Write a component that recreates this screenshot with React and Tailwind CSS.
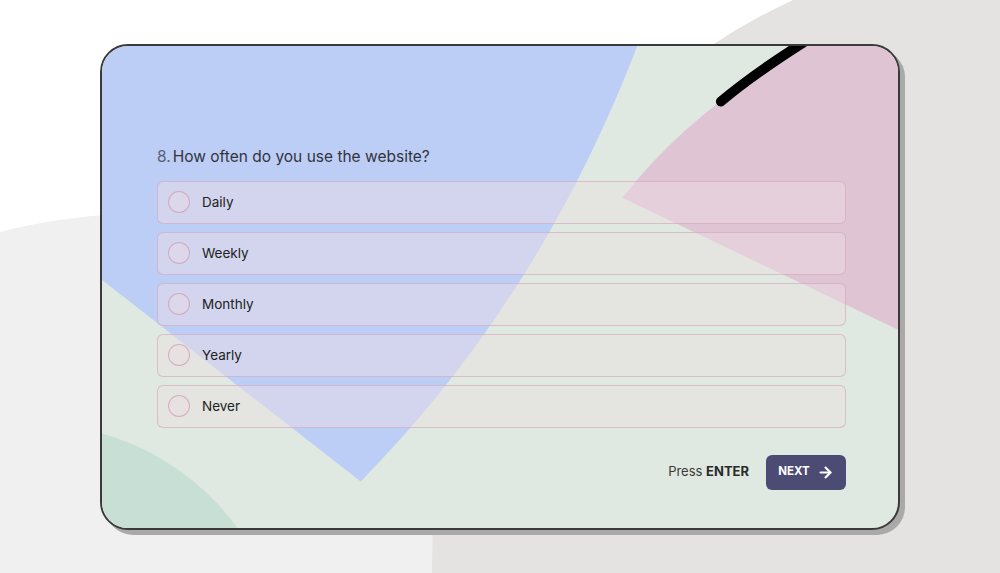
import { ArrowRight } from 'lucide-react';

const options = ['Daily', 'Weekly', 'Monthly', 'Yearly', 'Never'];

function CardShapes() {
  return (
    <svg
      className="absolute inset-0 w-full h-full"
      viewBox="100 44 800 486"
      preserveAspectRatio="none"
    >
      {/* blue wedge */}
      <path d="M90,30 L638,30 L638,44 Q540,300 360,483 L100,280 L90,272 Z" fill="#bdcef6" />
      {/* pink wedge */}
      <path d="M623,197 Q690,110 805,44 L805,30 L910,30 L910,335 L900,330 Z" fill="#dfc4d3" />
      {/* green circle bottom left */}
      <circle cx="30" cy="680" r="255" fill="#c8dfd5" />
      {/* black arc */}
      <path d="M722,100 Q755,72 812,36" fill="none" stroke="#000" strokeWidth="10" strokeLinecap="round" />
    </svg>
  );
}

function Option({ label }) {
  return (
    <div className="flex items-center h-[43px] rounded-md border border-[rgba(205,150,175,0.5)] bg-[rgba(234,221,226,0.45)] pl-[10px]">
      <span className="w-[22px] h-[22px] rounded-full border border-[rgba(205,140,165,0.6)] bg-[rgba(242,220,230,0.35)]" />
      <span className="ml-3 text-[13.5px] text-[#222]">{label}</span>
    </div>
  );
}

export default function App() {
  return (
    <div className="relative w-full h-[573px] overflow-hidden bg-white font-['Inter',sans-serif]">
      {/* background blobs */}
      <div className="absolute left-[-451px] top-[213px] w-[1202px] h-[1202px] rounded-full bg-[#f0f0f0]" />
      <div className="absolute left-[432px] top-[-57px] w-[1242px] h-[1242px] rounded-full bg-[#e4e3e1]" />

      <div className="relative flex items-center justify-center h-full">
        <div className="relative w-[800px] h-[486px] rounded-[28px] border-2 border-[#3a3a3a] bg-[#dfe9e1] shadow-[5px_5px_0_#a9a9a9] overflow-hidden">
          <CardShapes />

          <div className="relative w-[689px] ml-[55px] pt-[99px]">
            <h2 className="flex items-baseline text-[15.5px] leading-6 text-[#33333d]">
              <span className="text-[#5f5f78] mr-[2px]">8.</span>
              How often do you use the website?
            </h2>

            <div className="mt-[12px] flex flex-col gap-2">
              {options.map((o) => (
                <Option key={o} label={o} />
              ))}
            </div>

            <div className="mt-[27px] flex items-center justify-end gap-[17px]">
              <span className="text-[13px] text-[#3a3a3a]">
                Press <b className="font-bold text-[#2a2a2a]">ENTER</b>
              </span>
              <button className="flex items-center justify-center gap-[7px] w-[80px] h-[35px] rounded-md bg-[#4b4b74] text-white text-[11.5px] font-bold">
                NEXT
                <ArrowRight size={17} strokeWidth={3} />
              </button>
            </div>
          </div>
        </div>
      </div>
    </div>
  );
}
